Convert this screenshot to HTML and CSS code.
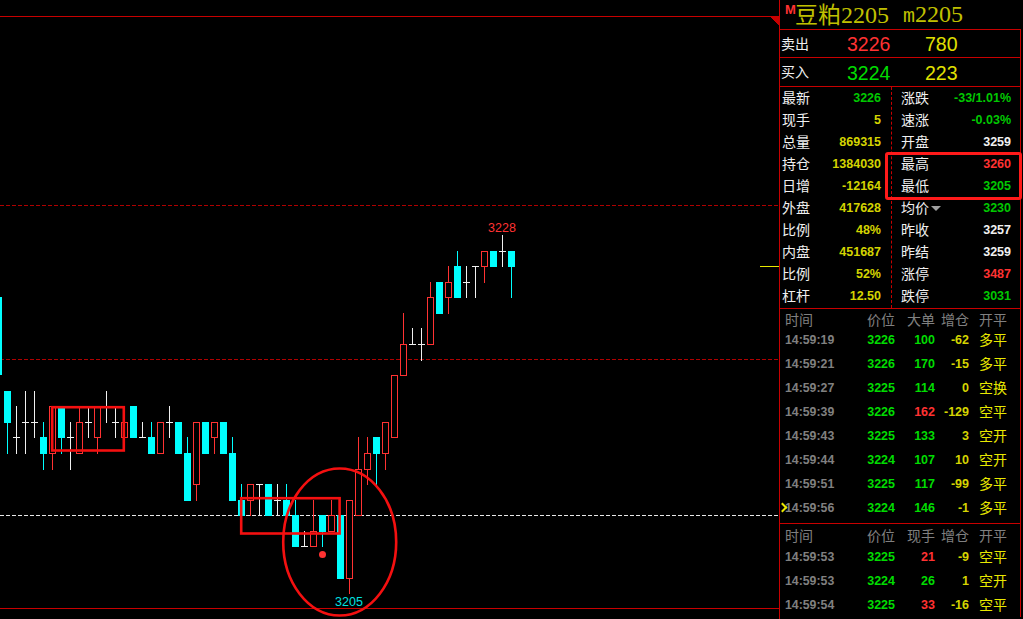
FILE: index.html
```html
<!DOCTYPE html>
<html lang="zh-CN">
<head>
    <meta charset="UTF-8">
    <title>豆粕2205</title>
    <link rel="stylesheet" href="styles.css">
</head>
<body class="page">
<div class="chart">
    <svg id="kline" class="kline" width="779" height="619" viewBox="0 0 779 619">
        <g class="grid" shape-rendering="crispEdges">
            <line class="line-solid" x1="0" y1="16.5" x2="779" y2="16.5"/>
            <line class="line-solid" x1="0" y1="608.5" x2="779" y2="608.5"/>
            <line class="line-dash" x1="0" y1="205.5" x2="779" y2="205.5"/>
            <line class="line-dash" x1="0" y1="359.5" x2="779" y2="359.5"/>
            <line class="line-white" x1="0" y1="515.5" x2="779" y2="515.5"/>
            <line class="line-last" x1="760" y1="266.5" x2="779" y2="266.5"/>
            <polygon class="corner" points="770,17 779,17 779,26"/>
        </g>
        <g id="candles" shape-rendering="crispEdges"></g>
        <circle class="dot" cx="322.5" cy="554.5" r="3.5"/>
        <text class="tag tag-high" x="502" y="232">3228</text>
        <text class="tag tag-low" x="349" y="606">3205</text>
        <rect class="mark" x="52.2" y="407.2" width="71.6" height="43.3"/>
        <rect class="mark" x="241.2" y="498.2" width="98.4" height="35.3"/>
        <ellipse class="mark" cx="339.7" cy="542" rx="56.5" ry="73.5"/>
    </svg>
</div>

<div class="panel">
    <div class="title">
        <span class="badge">M</span>
        <span class="name"><span class="name-cn">豆粕</span>2205</span>
        <span class="code"><span class="code-m">m</span>2205</span>
    </div>

    <div class="quote quote-sell">
        <span class="quote-label">卖出</span>
        <span class="quote-price red">3226</span>
        <span class="quote-vol">780</span>
    </div>
    <div class="quote quote-buy">
        <span class="quote-label">买入</span>
        <span class="quote-price bright">3224</span>
        <span class="quote-vol">223</span>
    </div>

    <div class="stats">
        <div class="stats-col stats-left">
            <div class="stat"><span>最新</span><b class="green">3226</b></div>
            <div class="stat"><span>现手</span><b class="yellow">5</b></div>
            <div class="stat"><span>总量</span><b class="yellow">869315</b></div>
            <div class="stat"><span>持仓</span><b class="yellow">1384030</b></div>
            <div class="stat"><span>日增</span><b class="yellow">-12164</b></div>
            <div class="stat"><span>外盘</span><b class="yellow">417628</b></div>
            <div class="stat"><span>比例</span><b class="yellow">48%</b></div>
            <div class="stat"><span>内盘</span><b class="yellow">451687</b></div>
            <div class="stat"><span>比例</span><b class="yellow">52%</b></div>
            <div class="stat"><span>杠杆</span><b class="yellow">12.50</b></div>
        </div>
        <div class="stats-col stats-right">
            <div class="stat"><span>涨跌</span><b class="green">-33/1.01%</b></div>
            <div class="stat"><span>速涨</span><b class="green">-0.03%</b></div>
            <div class="stat"><span>开盘</span><b class="white">3259</b></div>
            <div class="stat"><span>最高</span><b class="red">3260</b></div>
            <div class="stat"><span>最低</span><b class="green">3205</b></div>
            <div class="stat"><span class="has-arrow">均价</span><b class="green">3230</b></div>
            <div class="stat"><span>昨收</span><b class="white">3257</b></div>
            <div class="stat"><span>昨结</span><b class="white">3259</b></div>
            <div class="stat"><span>涨停</span><b class="red">3487</b></div>
            <div class="stat"><span>跌停</span><b class="green">3031</b></div>
        </div>
        <div class="stats-box"></div>
    </div>

    <div class="ticks ticks-big">
        <div class="tick tick-head"><span>时间</span><span>价位</span><span>大单</span><span>增仓</span><span>开平</span></div>
        <div class="tick"><b class="time">14:59:19</b><b class="bright">3226</b><b class="bright">100</b><b class="yellow">-62</b><span class="kind">多平</span></div>
        <div class="tick"><b class="time">14:59:21</b><b class="bright">3226</b><b class="bright">170</b><b class="yellow">-15</b><span class="kind">多平</span></div>
        <div class="tick"><b class="time">14:59:27</b><b class="bright">3225</b><b class="bright">114</b><b class="yellow">0</b><span class="kind">空换</span></div>
        <div class="tick"><b class="time">14:59:39</b><b class="bright">3226</b><b class="red">162</b><b class="yellow">-129</b><span class="kind">空平</span></div>
        <div class="tick"><b class="time">14:59:43</b><b class="bright">3225</b><b class="bright">133</b><b class="yellow">3</b><span class="kind">空开</span></div>
        <div class="tick"><b class="time">14:59:44</b><b class="bright">3224</b><b class="bright">107</b><b class="yellow">10</b><span class="kind">空开</span></div>
        <div class="tick"><b class="time">14:59:51</b><b class="bright">3225</b><b class="bright">117</b><b class="yellow">-99</b><span class="kind">多平</span></div>
        <div class="tick tick-cur"><b class="time">14:59:56</b><b class="bright">3224</b><b class="bright">146</b><b class="yellow">-1</b><span class="kind">多平</span></div>
    </div>

    <div class="ticks ticks-all">
        <div class="tick tick-head"><span>时间</span><span>价位</span><span>现手</span><span>增仓</span><span>开平</span></div>
        <div class="tick"><b class="time">14:59:53</b><b class="bright">3225</b><b class="red">21</b><b class="yellow">-9</b><span class="kind">空平</span></div>
        <div class="tick"><b class="time">14:59:53</b><b class="bright">3224</b><b class="bright">26</b><b class="yellow">1</b><span class="kind">空开</span></div>
        <div class="tick"><b class="time">14:59:54</b><b class="bright">3225</b><b class="red">33</b><b class="yellow">-16</b><span class="kind">空平</span></div>
    </div>
</div>

<script src="chart.js"></script>
</body>
</html>
```

FILE: styles.css
```css
* {
    box-sizing: border-box;
}

html, body {
    margin: 0;
    height: 100%;
}

.page {
    display: flex;
    width: 1023px;
    height: 619px;
    overflow: hidden;
    background: #000;
    color: #f0f0f0;
    font-family: "Noto Sans CJK SC", "Liberation Sans", sans-serif;
    font-size: 14px;
}

.chart {
    flex: 0 0 779px;
}

.kline {
    display: block;
}

.line-solid {
    stroke: #c80000;
}

.line-dash {
    stroke: #b00000;
    stroke-dasharray: 4 2;
}

.line-white {
    stroke: #e8e8e8;
    stroke-dasharray: 4 2;
}

.line-last {
    stroke: #e8e800;
}

.corner {
    fill: #c80000;
}

.dot {
    fill: #ff3232;
}

.tag {
    font-family: "Liberation Sans", sans-serif;
    font-size: 12.5px;
    text-anchor: middle;
}

.tag-high {
    fill: #ff3232;
}

.tag-low {
    fill: #00e0e0;
}

.mark {
    fill: none;
    stroke: #f41010;
    stroke-width: 2.6;
}

.panel {
    flex: 0 0 244px;
    border-left: 1px solid #c80000;
}

.red {
    color: #ff3232;
}

.green {
    color: #00c800;
}

.bright {
    color: #00dc00;
}

.yellow {
    color: #d4d400;
}

.white {
    color: #f0f0f0;
}

.title {
    display: flex;
    align-items: center;
    height: 30px;
    margin-right: 2px;
    padding-top: 1px;
    border-bottom: 1px solid #c80000;
    color: #c0c000;
    font-family: "Liberation Serif", "Noto Sans CJK SC", serif;
    font-size: 24px;
    line-height: 28px;
    white-space: nowrap;
}

.badge {
    align-self: flex-start;
    width: 15px;
    padding-left: 5px;
    color: #ff3232;
    font-family: "Liberation Sans", sans-serif;
    font-size: 13px;
    font-weight: bold;
    line-height: 18px;
}

.name {
    width: 108px;
}

.name-cn {
    font-size: 23px;
}

.code-m {
    font-family: "Liberation Mono", monospace;
    font-size: 20px;
}

.quote {
    display: flex;
    align-items: center;
    margin-right: 2px;
    padding-left: 1px;
    border-right: 1px solid #c80000;
    border-bottom: 1px solid #c80000;
}

.quote-sell {
    height: 28px;
}

.quote-buy {
    height: 29px;
}

.quote-label {
    width: 66px;
    margin-top: -2px;
}

.quote-price {
    width: 78px;
    margin-top: 2px;
    font-family: "Liberation Sans", sans-serif;
    font-size: 19.5px;
}

.quote-vol {
    margin-top: 2px;
    color: #e0e000;
    font-family: "Liberation Sans", sans-serif;
    font-size: 19.5px;
}

.stats {
    position: relative;
    display: flex;
    height: 222px;
    margin-right: 2px;
    border-right: 1px solid #c80000;
    border-bottom: 1px solid #c80000;
}

.stats-col {
    display: grid;
    grid-auto-rows: 22px;
}

.stats-left {
    width: 112px;
    padding: 0 10px 0 2px;
    border-right: 1px dashed #c80000;
}

.stats-right {
    flex: 1;
    padding: 0 9px;
}

.stat {
    display: flex;
    align-items: center;
    justify-content: space-between;
    white-space: nowrap;
}

.stat span {
    margin-top: -2px;
}

.stat b {
    font-family: "Liberation Sans", sans-serif;
    font-size: 12.5px;
    margin-top: -1px;
}

.has-arrow {
    position: relative;
}

.has-arrow::after {
    content: "";
    position: absolute;
    left: 30px;
    top: 9px;
    border-top: 5px solid #a0a0a0;
    border-left: 5px solid transparent;
    border-right: 5px solid transparent;
}

.stats-box {
    position: absolute;
    left: 105px;
    top: 65px;
    width: 137px;
    height: 48px;
    border: 3px solid #ff1a1a;
    border-radius: 3px;
}

.ticks {
    margin-right: 2px;
    border-right: 1px solid #c80000;
}

.ticks-big {
    padding-bottom: 3px;
    border-bottom: 1px solid #c80000;
}

.tick {
    position: relative;
    display: grid;
    grid-template-columns: 110px 40px 34px 1fr;
    align-items: center;
    height: 24px;
    padding-left: 5px;
    white-space: nowrap;
}

.tick b {
    font-family: "Liberation Sans", sans-serif;
    font-size: 12.5px;
    text-align: right;
}

.tick .time {
    position: absolute;
    left: 5px;
    color: #808080;
    font-size: 12.3px;
}

.tick b:nth-child(2) {
    grid-column: 1;
}

.tick-head {
    height: 19px;
    color: #808080;
}

.ticks-all .tick-head {
    height: 21px;
}

.tick-head span {
    text-align: right;
}

.tick-head span:first-child,
.tick-head span:last-child {
    text-align: left;
}

.tick-head span:first-child {
    position: absolute;
    left: 5px;
}

.tick-head span:nth-child(2) {
    grid-column: 1;
}

.tick-head span:last-child,
.kind {
    padding-left: 10px;
}

.kind {
    margin-top: -2px;
    color: #e8e800;
}

.tick-cur::before {
    content: "";
    position: absolute;
    left: -1px;
    top: 8px;
    width: 5px;
    height: 5px;
    border-top: 2px solid #e8e800;
    border-right: 2px solid #e8e800;
    transform: rotate(45deg);
}
```

FILE: chart.js
```js
// k = ticks below the 3228 high, one tick is 15.57px
// [kind, high, bodyTop, bodyBottom, low]  kind: c cyan, r red hollow, w doji (bodyTop = cross)
var bars = [
    ['c', 10, 10, 12, 14],
    ['w', 11, 13, 13, 14],
    ['w', 10, 12, 12, 14],
    ['w', 10, 12, 12, 13],
    ['c', 12, 13, 14, 15],
    ['r', 11, 11, 14, 15],
    ['c', 11, 11, 13, 14],
    ['w', 12, 13, 13, 15],
    ['r', 11, 12, 14, 14],
    ['w', 11, 12, 12, 13],
    ['r', 11, 11, 13, 14],
    ['w', 10, 11, 11, 12],
    ['w', 11, 12, 12, 13],
    ['r', 12, 12, 13, 13],
    ['c', 11, 11, 13, 13],
    ['w', 12, 13, 13, 13],
    ['c', 12, 13, 14, 14],
    ['r', 12, 12, 14, 14],
    ['w', 11, 12, 12, 13],
    ['c', 12, 12, 14, 14],
    ['c', 13, 14, 17, 17],
    ['r', 12, 12, 16, 17],
    ['c', 12, 12, 14, 14],
    ['r', 12, 12, 13, 14],
    ['c', 12, 12, 14, 14],
    ['c', 13, 14, 17, 17],
    ['c', 16, 17, 18, 18],
    ['r', 16, 16, 17, 18],
    ['w', 16, 16, 16, 18],
    ['c', 16, 16, 18, 18],
    ['w', 16, 17, 17, 18],
    ['c', 16, 17, 18, 18],
    ['c', 17, 18, 20, 20],
    ['w', 19, 20, 20, 20],
    ['r', 17, 19, 20, 20],
    ['c', 18, 18, 19, 20],
    ['r', 17, 18, 19, 19],
    ['c', 18, 18, 22, 22],
    ['r', 17, 17, 22, 23],
    ['r', 13, 15, 18, 18],
    ['r', 13, 14, 15, 16],
    ['c', 13, 13, 14, 16],
    ['r', 12, 12, 14, 15],
    ['r', 9, 9, 13, 13],
    ['r', 5, 7, 9, 9],
    ['w', 6, 7, 7, 7],
    ['w', 6, 7, 7, 8],
    ['r', 3, 4, 7, 7],
    ['c', 3, 3, 5, 5],
    ['r', 2, 3, 4, 5],
    ['c', 1, 2, 4, 4],
    ['w', 2, 3, 3, 4],
    ['w', 2, 2, 2, 4],
    ['r', 1, 1, 2, 3],
    ['c', 1, 1, 2, 2],
    ['w', 0, 1, 1, 2],
    ['c', 1, 1, 2, 4]
];

var COLORS = { c: '#00ffff', r: '#ff3232', w: '#f0f0f0' };
var $candles = document.getElementById('candles');

function levelY(k) {
    return Math.round(235 + k * 15.57);
}

function addRect(x, y, w, h, fill, stroke) {
    var el = document.createElementNS('http://www.w3.org/2000/svg', 'rect');
    el.setAttribute('x', x);
    el.setAttribute('y', y);
    el.setAttribute('width', w);
    el.setAttribute('height', h);
    el.setAttribute('fill', fill);
    if (stroke) {
        el.setAttribute('stroke', stroke);
    }
    $candles.appendChild(el);
}

// the bar cut off by the left edge
addRect(0, levelY(4), 2, levelY(9) - levelY(4), COLORS.c);

bars.forEach(function (bar, i) {
    var x = 7 + i * 9;
    var color = COLORS[bar[0]];
    var top = levelY(bar[2]);
    var bottom = levelY(bar[3]);

    addRect(x, levelY(bar[1]), 1, levelY(bar[4]) - levelY(bar[1]) + 1, color);

    if (bar[0] === 'w') {
        addRect(x - 3, top, 7, 1, color);
    } else if (bar[0] === 'r') {
        addRect(x - 2.5, top + 0.5, 6, bottom - top, '#000', color);
    } else {
        addRect(x - 3, top, 7, bottom - top + 1, color);
    }
});
```
